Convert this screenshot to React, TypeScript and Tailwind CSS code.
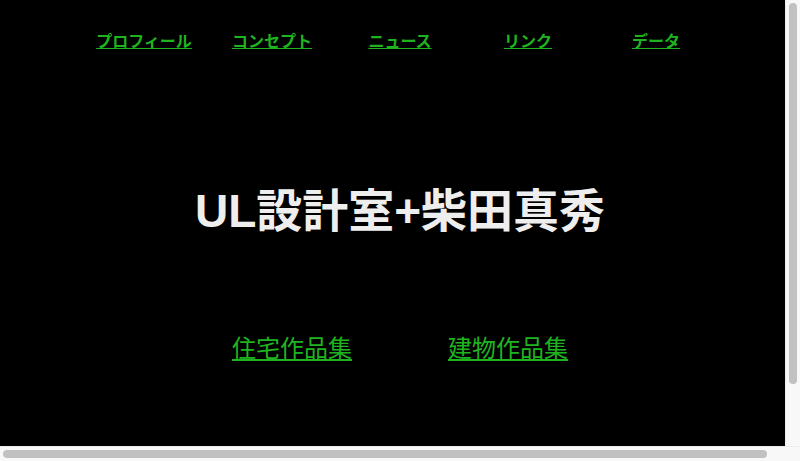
const navItems = ["プロフィール", "コンセプト", "ニュース", "リンク", "データ"];

const font = { fontFamily: '"Liberation Sans", "Noto Sans CJK JP", sans-serif' };

export default function App() {
  return (
    <div className="w-[800px] h-[461px] flex flex-col overflow-hidden bg-[#f8f8f8]" style={font}>
      <div className="flex h-[446px]">
        {/* page viewport */}
        <div className="w-[785px] h-[446px] overflow-hidden bg-black">
          <div className="w-[800px] h-[518px] bg-black">
            <nav className="pt-[30px] flex justify-center">
              <ul className="grid grid-cols-5 w-[640px]">
                {navItems.map((item) => (
                  <li key={item} className="text-center">
                    <a href="#" className="text-[16px] font-bold leading-[22px] text-[#1fb41f] underline">
                      {item}
                    </a>
                  </li>
                ))}
              </ul>
            </nav>
            <h1 className="mt-[129px] text-center text-[46px] font-bold leading-[56px] text-[#eeeeee]">
              UL設計室+柴田真秀
            </h1>
            <div className="mt-[93px] flex justify-center gap-[96px]">
              <a href="#" className="text-[24px] leading-[34px] text-[#1fb41f] underline">
                住宅作品集
              </a>
              <a href="#" className="text-[24px] leading-[34px] text-[#1fb41f] underline">
                建物作品集
              </a>
            </div>
          </div>
        </div>
        {/* vertical scrollbar */}
        <div className="w-[15px] border-l border-[#ececec] pt-[3px] pl-[3px]">
          <div className="w-[8px] h-[381px] rounded-full bg-[#c1c1c1]" />
        </div>
      </div>
      {/* horizontal scrollbar */}
      <div className="flex h-[15px] border-t border-[#ececec]">
        <div className="w-[785px] pt-[3px] pl-[3px]">
          <div className="w-[764px] h-[8px] rounded-full bg-[#c1c1c1]" />
        </div>
        <div className="w-[15px]" />
      </div>
    </div>
  );
}
